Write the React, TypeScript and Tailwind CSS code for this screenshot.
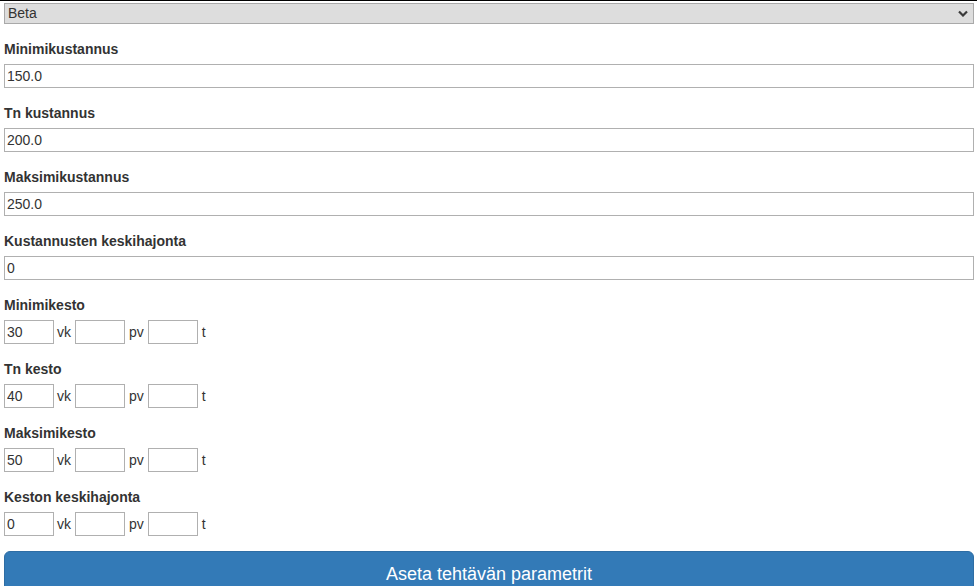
import React from 'react';

const costFields = [
  { label: 'Minimikustannus', value: '150.0' },
  { label: 'Tn kustannus', value: '200.0' },
  { label: 'Maksimikustannus', value: '250.0' },
  { label: 'Kustannusten keskihajonta', value: '0' },
];

const durationFields = [
  { label: 'Minimikesto', weeks: '30' },
  { label: 'Tn kesto', weeks: '40' },
  { label: 'Maksimikesto', weeks: '50' },
  { label: 'Keston keskihajonta', weeks: '0' },
];

const inputCls =
  'h-[24px] border border-[#b0b0b0] bg-white px-[2px] text-[14px] text-[#333] outline-none';

export default function App() {
  return (
    <div className="min-h-screen bg-white font-['Liberation_Sans',Arial,sans-serif] text-[14px] text-[#333]">
      <div className="h-px bg-black" />
      <div className="pl-[4px] pr-[3px] pt-[2px]">
        {/* distribution select */}
        <div className="relative mb-[15px]">
          <select
            defaultValue="beta"
            className="block h-[21px] w-full appearance-none border border-[#a9a9a9] bg-[#dddddd] pl-[3px] text-[14px] leading-[19px] text-[#333] outline-none"
          >
            <option value="beta">Beta</option>
            <option value="normal">Normaali</option>
            <option value="triangle">Kolmio</option>
          </select>
          <svg
            className="pointer-events-none absolute right-[6px] top-[7px]"
            width="10"
            height="7"
            viewBox="0 0 10 7"
          >
            <path d="M1 1.5 L5 5.5 L9 1.5" stroke="#3a3a3a" strokeWidth="2.2" fill="none" />
          </svg>
        </div>

        {costFields.map((f) => (
          <div key={f.label} className="mb-[15px]">
            <label className="mb-[5px] block text-[14px] font-bold leading-[20px]">{f.label}</label>
            <input type="text" defaultValue={f.value} className={`${inputCls} block w-full`} />
          </div>
        ))}

        {durationFields.map((f) => (
          <div key={f.label} className="mb-[15px]">
            <label className="mb-[5px] block text-[14px] font-bold leading-[20px]">{f.label}</label>
            <div className="flex items-center">
              <input type="text" defaultValue={f.weeks} className={`${inputCls} w-[50px]`} />
              <span className="ml-[3px] mr-[4px] text-[14px]">vk</span>
              <input type="text" className={`${inputCls} w-[50px]`} />
              <span className="ml-[4px] mr-[4px] text-[14px]">pv</span>
              <input type="text" className={`${inputCls} w-[50px]`} />
              <span className="ml-[4px] text-[14px]">t</span>
            </div>
          </div>
        ))}

        <button
          type="button"
          className="block h-[46px] w-full rounded-[6px] border border-[#2e6da4] bg-[#337ab7] text-[18px] leading-[24px] text-white"
        >
          Aseta tehtävän parametrit
        </button>
      </div>
    </div>
  );
}
